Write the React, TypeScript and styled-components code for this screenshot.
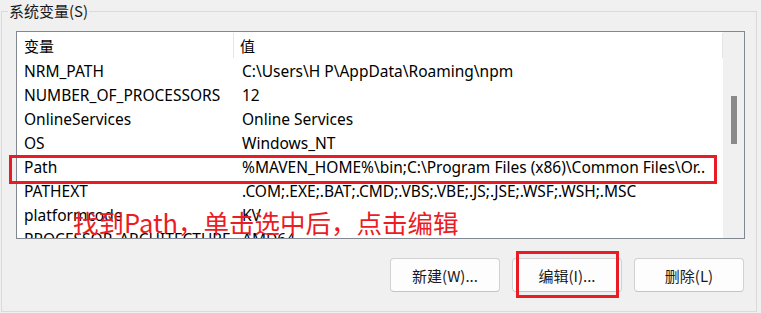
import React from 'react'
import styled, { createGlobalStyle } from 'styled-components'

const Global = createGlobalStyle`
  html, body {
    margin: 0;
    padding: 0;
    background: #f0f0f0;
  }
  body {
    font-family: "Noto Sans", "Noto Sans CJK SC", sans-serif;
    color: #000;
  }
`;

const Page = styled.div`
  position: relative;
  width: 761px;
  height: 313px;
  overflow: hidden;
  background: #f0f0f0;
`;

const Frame = styled.div`
  margin: 11px 4px 0 1px;
  height: 299px;
  border: 1px solid #dadada;
  display: flex;
  flex-direction: column;
`;

const Legend = styled.div`
  width: fit-content;
  margin: -11px 0 0 6px;
  padding: 0 1px;
  background: #f0f0f0;
  font-family: "Noto Sans CJK SC", "Noto Sans", sans-serif;
  font-size: 15px;
  line-height: 20px;
  color: #1a1a1a;
`;

const ListBox = styled.div`
  margin: 10px 11px 0 14px;
  height: 206px;
  border: 1px solid #828790;
  background: #fff;
  display: flex;
  overflow: hidden;
`;

const Table = styled.div`
  flex: 1;
  display: flex;
  flex-direction: column;
`;

const Header = styled.div`
  height: 27px;
  flex: none;
  display: grid;
  grid-template-columns: 217px 1fr;
  align-items: stretch;
  font-family: "Noto Sans CJK SC", "Noto Sans", sans-serif;
  font-size: 15px;
`;

const HeadCell = styled.div<{ $last?: boolean }>`
  display: flex;
  align-items: center;
  padding-left: ${p => (p.$last ? 6 : 7)}px;
  border-right: 1px solid #e5e5e5;
  margin: 1px 0 1px;
`;

const Row = styled.div`
  height: 24px;
  flex: none;
  display: grid;
  grid-template-columns: 218px 1fr;
  align-items: center;
  font-size: 15.5px;
  white-space: nowrap;
`;

const Cell = styled.div`
  padding-left: 7px;
  overflow: hidden;
`;

const ScrollBar = styled.div`
  width: 21px;
  flex: none;
  background: #f0f0f0;
  display: flex;
  justify-content: center;
  padding-top: 64px;
`;

const Thumb = styled.div`
  width: 6px;
  height: 48px;
  background: #8a8a8a;
`;

const Buttons = styled.div`
  display: flex;
  justify-content: flex-end;
  gap: 12px;
  margin: 19px 12px 0 0;
`;

const Button = styled.button`
  width: 110px;
  height: 34px;
  border: 1px solid #d1d1d1;
  border-bottom-color: #c4c4c4;
  border-radius: 4px;
  background: #fdfdfd;
  font-family: "Noto Sans CJK SC", "Noto Sans", sans-serif;
  font-size: 15px;
  color: #1a1a1a;
  padding: 0;
`;

const Mark = styled.div`
  position: absolute;
  border: 3px solid #e81c24;
  box-sizing: border-box;
`;

const Note = styled.div`
  position: absolute;
  left: 73px;
  top: 206px;
  font-family: "Noto Sans CJK SC", sans-serif;
  font-size: 25.5px;
  line-height: 32px;
  color: #ec1c24;
  white-space: nowrap;
`;

const rows: [string, string][] = [
  ['NRM_PATH', 'C:\\Users\\H P\\AppData\\Roaming\\npm'],
  ['NUMBER_OF_PROCESSORS', '12'],
  ['OnlineServices', 'Online Services'],
  ['OS', 'Windows_NT'],
  ['Path', '%MAVEN_HOME%\\bin;C:\\Program Files (x86)\\Common Files\\Or..'],
  ['PATHEXT', '.COM;.EXE;.BAT;.CMD;.VBS;.VBE;.JS;.JSE;.WSF;.WSH;.MSC'],
  ['platformcode', 'KV'],
  ['PROCESSOR_ARCHITECTURE', 'AMD64'],
];

const App = () => (
  <Page>
    <Global />
    <Frame>
      <Legend>系统变量(S)</Legend>
      <ListBox>
        <Table>
          <Header>
            <HeadCell>变量</HeadCell>
            <HeadCell $last>值</HeadCell>
          </Header>
          {rows.map(([name, value]) => (
            <Row key={name}>
              <Cell>{name}</Cell>
              <Cell>{value}</Cell>
            </Row>
          ))}
        </Table>
        <ScrollBar>
          <Thumb />
        </ScrollBar>
      </ListBox>
      <Buttons>
        <Button>新建(W)...</Button>
        <Button>编辑(I)...</Button>
        <Button>删除(L)</Button>
      </Buttons>
    </Frame>
    <Mark style={{ left: 9, top: 155, width: 708, height: 29 }} />
    <Note>找到Path，单击选中后，点击编辑</Note>
    <Mark style={{ left: 516, top: 251, width: 103, height: 47 }} />
  </Page>
);

export default App
